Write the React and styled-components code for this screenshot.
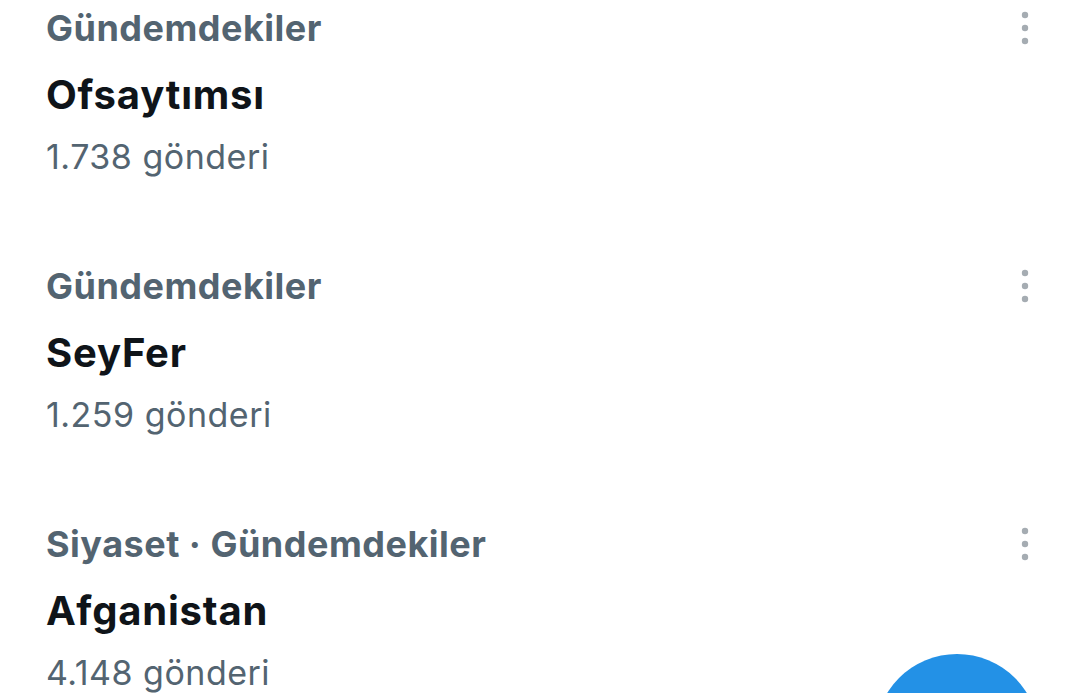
import React from 'react';
import styled, { createGlobalStyle } from 'styled-components';

const trends = [
  { category: 'Gündemdekiler', title: 'Ofsaytımsı', count: '1.738 gönderi' },
  { category: 'Gündemdekiler', title: 'SeyFer', count: '1.259 gönderi' },
  { category: 'Siyaset · Gündemdekiler', title: 'Afganistan', count: '4.148 gönderi' },
];

const App = () => {
  return (
    <>
      <GlobalStyle />
      <Page>
        <TrendList>
          {trends.map((t, i) => (
            <TrendRow key={i}>
              <TrendInfo>
                <Category>{t.category}</Category>
                <Title>{t.title}</Title>
                <Count>{t.count}</Count>
              </TrendInfo>
              <MoreButton aria-label="Daha fazla">
                <svg width="12" height="40" viewBox="0 0 12 40">
                  <circle cx="6" cy="7" r="3.2" fill="#a5acb2" />
                  <circle cx="6" cy="20" r="3.2" fill="#a5acb2" />
                  <circle cx="6" cy="33" r="3.2" fill="#a5acb2" />
                </svg>
              </MoreButton>
            </TrendRow>
          ))}
        </TrendList>
        <Fab />
      </Page>
    </>
  );
};

const GlobalStyle = createGlobalStyle`
  html, body {
    margin: 0;
    padding: 0;
    background: #ffffff;
    overflow: hidden;
  }
  body {
    font-family: Inter, Roboto, "Noto Sans", sans-serif;
  }
`;

const Page = styled.div`
  position: relative;
  width: 1080px;
  height: 693px;
  overflow: hidden;
  background: #ffffff;
`;

const TrendList = styled.div`
  display: flex;
  flex-direction: column;
`;

const TrendRow = styled.div`
  display: flex;
  justify-content: space-between;
  align-items: flex-start;
  height: 258px;
  padding: 0 46px 0 46px;
  box-sizing: border-box;
`;

const TrendInfo = styled.div`
  display: flex;
  flex-direction: column;
`;

const Category = styled.div`
  height: 56px;
  line-height: 56px;
  font-size: 36px;
  font-weight: 700;
  letter-spacing: 0.5px;
  color: #536471;
`;

const Title = styled.div`
  height: 78px;
  line-height: 78px;
  font-size: 40px;
  font-weight: 700;
  letter-spacing: 0.8px;
  color: #0f1419;
`;

const Count = styled.div`
  height: 46px;
  line-height: 46px;
  font-size: 34px;
  font-weight: 400;
  letter-spacing: 0.5px;
  color: #536471;
`;

const MoreButton = styled.div`
  display: flex;
  align-items: center;
  justify-content: center;
  width: 40px;
  height: 56px;
  margin-right: -11px;
`;

const Fab = styled.div`
  position: absolute;
  left: 875px;
  top: 654px;
  width: 164px;
  height: 164px;
  border-radius: 50%;
  background: #2391e6;
`;

export default App;
